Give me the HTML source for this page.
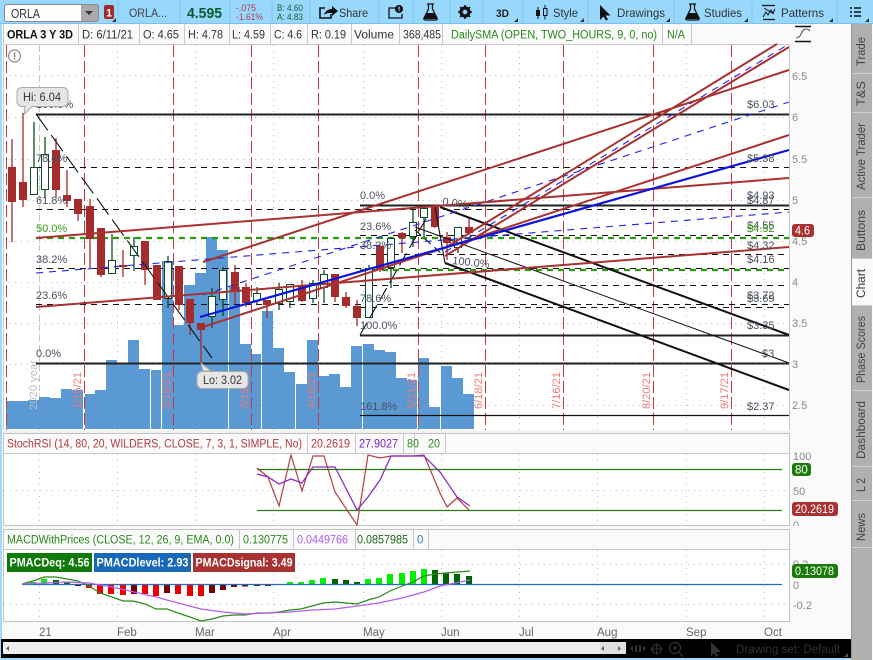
<!DOCTYPE html>
<html><head><meta charset="utf-8"><style>
html,body{margin:0;padding:0;background:#fafafa;width:873px;height:660px;overflow:hidden}
svg{display:block}
text{font-family:"Liberation Sans",sans-serif}
</style></head><body>
<svg xmlns="http://www.w3.org/2000/svg" width="873" height="660" viewBox="0 0 873 660">
<rect width="873" height="660" fill="#fafafa"/>
<!-- frame -->
<rect x="0" y="0" width="2" height="660" fill="#9fd9fb"/>
<rect width="873" height="23" fill="#99d8fd"/>
<rect y="23" width="873" height="1" fill="#7fc0e6"/>
<!-- toolbar separators -->
<path d="M118 1V23M180 1V23M230 1V23M272 1V23M310 1V23M379 1V23M413 1V23M450 1V23M483 1V23M523 1V23M588 1V23M674 1V23M752 1V23M837 1V23" stroke="#86c4e8" stroke-width="1"/>
<!-- symbol box -->
<rect x="4.500" y="4.500" width="94" height="17" rx="2" fill="#fff" stroke="#8a8a8a"/>
<text x="11" y="18" font-size="12.500" fill="#333" textLength="29" lengthAdjust="spacingAndGlyphs">ORLA</text>
<rect x="81" y="5" width="17" height="16" fill="#aaa"/>
<path d="M85 11h8l-4 4z" fill="#333"/>
<rect x="104" y="5" width="10" height="14" rx="2" fill="#a52a2a"/>
<text x="106" y="16.500" font-size="11" font-weight="bold" fill="#fff">1</text>
<path d="M116 22h-4l4-4z" fill="#333"/>
<text x="129" y="17" font-size="12" fill="#444" textLength="38" lengthAdjust="spacingAndGlyphs">ORLA...</text>
<text x="187" y="18" font-size="15" font-weight="bold" fill="#0b5a2c" textLength="35" lengthAdjust="spacingAndGlyphs">4.595</text>
<text x="236" y="11" font-size="9.500" fill="#b23a4a" textLength="20" lengthAdjust="spacingAndGlyphs">-.075</text>
<text x="236" y="20" font-size="9.500" fill="#b23a4a" textLength="27" lengthAdjust="spacingAndGlyphs">-1.61%</text>
<text x="277" y="11" font-size="9.500" fill="#15603a" textLength="26" lengthAdjust="spacingAndGlyphs">B: 4.60</text>
<text x="277" y="20" font-size="9.500" fill="#15603a" textLength="26" lengthAdjust="spacingAndGlyphs">A: 4.83</text>
<!-- share -->
<path d="M331 14v4h-11v-10h5" fill="none" stroke="#111" stroke-width="1.600"/>
<path d="M324 15c1-4 4-6 8-6v-3l6 5-6 5v-3c-3 0-6 0-8 2z" fill="#111"/>
<text x="339" y="17" font-size="12" fill="#333" textLength="29" lengthAdjust="spacingAndGlyphs">Share</text>
<!-- alert book -->
<path d="M396 8h-7v10h13v-4" fill="none" stroke="#111" stroke-width="1.300"/>
<circle cx="399" cy="9" r="4" fill="#111"/><rect x="398.400" y="6.500" width="1.300" height="3" fill="#99d8fd"/><rect x="398.400" y="10.300" width="1.300" height="1" fill="#99d8fd"/>
<!-- flask -->
<path d="M427 4h7M428.500 4v5l-4.500 9c-.5 1 0 2 1.500 2h10c1.500 0 2-1 1.500-2l-4.500-9v-5" fill="none" stroke="#111" stroke-width="1.300"/>
<path d="M426.500 13h8l3 6h-14z" fill="#111"/>
<!-- gear -->
<circle cx="465" cy="12" r="4.300" fill="none" stroke="#111" stroke-width="2.600"/>
<path d="M465 5v14M458 12h14M460 7l10 10M470 7l-10 10" stroke="#111" stroke-width="1.600"/>
<circle cx="465" cy="12" r="2.200" fill="#99d8fd"/>
<text x="496" y="17" font-size="11" font-weight="bold" fill="#222" textLength="13" lengthAdjust="spacingAndGlyphs">3D</text>
<path d="M518 22h-4l4-4zM584 22h-4l4-4zM670 22h-4l4-4zM748 22h-4l4-4zM833 22h-4l4-4zM869 22h-4l4-4z" fill="#333"/>
<!-- style -->
<rect x="536" y="10" width="4" height="6" fill="#111"/><path d="M538 7v12" stroke="#111"/>
<rect x="543.500" y="8.500" width="3.500" height="7" fill="#99d8fd" stroke="#111"/><path d="M545 5v3.500M545 15.500v4" stroke="#111"/>
<text x="553" y="17" font-size="12" fill="#333" textLength="25" lengthAdjust="spacingAndGlyphs">Style</text>
<!-- drawings cursor -->
<path d="M600 5v15l3.500-3.500 2.500 4 2-1-2.500-4h5z" fill="#111"/>
<text x="617" y="17" font-size="12" fill="#333" textLength="48" lengthAdjust="spacingAndGlyphs">Drawings</text>
<!-- studies flask -->
<path d="M689 4h7M690.500 4v5l-4.500 9c-.5 1 0 2 1.500 2h10c1.500 0 2-1 1.500-2l-4.500-9v-5" fill="none" stroke="#111" stroke-width="1.300"/>
<path d="M688.500 13h8l3 6h-14z" fill="#111"/>
<text x="704" y="17" font-size="12" fill="#333" textLength="38" lengthAdjust="spacingAndGlyphs">Studies</text>
<!-- patterns -->
<path d="M762 5.500h13M763 19.500h12" stroke="#111" stroke-width="1.200"/>
<path d="M763 17l3-5 2 3 3-5 2 3 2-4M764 8l10 6" fill="none" stroke="#111"/>
<text x="781" y="17" font-size="12" fill="#333" textLength="43" lengthAdjust="spacingAndGlyphs">Patterns</text>
<!-- list -->
<path d="M850 8h2M854 8h7M850 12h2M854 12h7M850 16h2M854 16h7" stroke="#111" stroke-width="1.500"/>

<!-- info bar -->
<path d="M3.500 44.500H789.500M3.500 24V44M78.500 24V44M139.500 24V44M184.500 24V44M229.500 24V44M270.500 24V44M307.500 24V44M351.500 24V44M399.500 24V44M442.500 24V44M662.500 24V44M691.500 24V44" stroke="#c8c8c8"/>
<g font-size="11.500" fill="#333">
<text x="7" y="38.500" font-weight="bold" fill="#111" textLength="66" lengthAdjust="spacingAndGlyphs">ORLA 3 Y 3D</text>
<text x="82" y="38.500" textLength="51" lengthAdjust="spacingAndGlyphs">D: 6/11/21</text>
<text x="143" y="38.500" textLength="36" lengthAdjust="spacingAndGlyphs">O: 4.65</text>
<text x="188" y="38.500" textLength="35" lengthAdjust="spacingAndGlyphs">H: 4.78</text>
<text x="232" y="38.500" textLength="33" lengthAdjust="spacingAndGlyphs">L: 4.59</text>
<text x="274" y="38.500" textLength="28" lengthAdjust="spacingAndGlyphs">C: 4.6</text>
<text x="311" y="38.500" textLength="35" lengthAdjust="spacingAndGlyphs">R: 0.19</text>
<text x="354" y="38.500" textLength="40" lengthAdjust="spacingAndGlyphs">Volume</text>
<text x="403" y="38.500" textLength="38" lengthAdjust="spacingAndGlyphs">368,485</text>
<text x="451" y="38.500" fill="#2a8a1a" textLength="206" lengthAdjust="spacingAndGlyphs">DailySMA (OPEN, TWO_HOURS, 9, 0, no)</text>
<text x="667" y="38.500" fill="#2a8a1a" textLength="18" lengthAdjust="spacingAndGlyphs">N/A</text>
</g>
<!-- S icon -->
<path d="M795 26.500h16M795 41.500h16" stroke="#111" stroke-width="1.600"/>
<path d="M796 38c3 0 4-2 5-4s2-5 5-5 3 1 4 2" fill="none" stroke="#555" stroke-width="1.100"/>

<!-- main chart plot -->
<rect x="3" y="45" width="786" height="385" fill="#fff"/>
<!-- grid -->
<path d="M3 75.500H789M3 117.500H789M3 159.500H789M3 200.500H789M3 241.500H789M3 282.500H789M3 323.500H789M3 364.500H789M3 405.500H789M39.500 45V430M117.500 45V430M195.500 45V430M273.500 45V430M363.500 45V430M441.500 45V430M519.500 45V430M597.500 45V430M686.500 45V430M764.500 45V430" stroke="#bcbcbc" stroke-dasharray="1 5" fill="none"/>
<path d="M39.500 45V430" stroke="#c4c4c4" stroke-dasharray="6 4"/>
<!-- volume -->
<g fill="#5a99d3">
<rect x="6" y="401" width="11" height="28"/><rect x="17" y="401" width="11" height="28"/><rect x="28" y="400" width="11" height="29"/><rect x="39" y="397" width="11" height="32"/><rect x="50" y="398" width="11" height="31"/><rect x="61" y="389" width="11" height="40"/><rect x="72" y="390" width="11" height="39"/><rect x="85" y="394" width="10" height="35"/><rect x="95" y="390" width="11" height="39"/><rect x="106" y="360" width="11" height="69"/><rect x="117" y="363" width="11" height="66"/><rect x="128" y="340" width="11" height="89"/><rect x="139" y="369" width="11" height="60"/><rect x="151" y="370" width="10" height="59"/><rect x="162" y="261" width="11" height="168"/><rect x="173" y="325" width="11" height="104"/><rect x="184" y="285" width="11" height="144"/><rect x="195" y="273" width="11" height="156"/><rect x="206" y="237" width="11" height="192"/><rect x="217" y="250" width="11" height="179"/><rect x="229" y="287" width="11" height="142"/><rect x="240" y="344" width="11" height="85"/><rect x="251" y="354" width="10" height="75"/><rect x="262" y="311" width="11" height="118"/><rect x="273" y="348" width="11" height="81"/><rect x="284" y="372" width="11" height="57"/><rect x="296" y="384" width="11" height="45"/><rect x="307" y="340" width="11" height="89"/><rect x="318" y="376" width="11" height="53"/><rect x="329" y="374" width="11" height="55"/><rect x="340" y="387" width="11" height="42"/><rect x="351" y="346" width="11" height="83"/><rect x="363" y="344" width="11" height="85"/><rect x="374" y="350" width="11" height="79"/><rect x="385" y="352" width="11" height="77"/><rect x="396" y="378" width="11" height="51"/><rect x="407" y="380" width="10" height="49"/><rect x="418" y="358" width="11" height="71"/><rect x="429" y="407" width="11" height="22"/><rect x="441" y="366" width="11" height="63"/><rect x="452" y="378" width="11" height="51"/><rect x="463" y="394" width="11" height="35"/>
</g>
<!-- vertical red dashes -->
<path d="M6.500 45V430M84.500 45V430M173.500 45V430M251.500 45V430M318.500 45V430M418.500 45V430M485.500 45V430M563.500 45V430M653.500 45V430M731.500 45V430" stroke="#c8383e" stroke-width="1" stroke-dasharray="12 4" fill="none"/>
<!-- rotated labels -->
<g font-size="11" fill="#ea7a7a">
<text transform="translate(81,409) rotate(-90)" textLength="37" lengthAdjust="spacingAndGlyphs">1/15/21</text>
<text transform="translate(170,409) rotate(-90)" textLength="37" lengthAdjust="spacingAndGlyphs">2/19/21</text>
<text transform="translate(248,409) rotate(-90)" textLength="37" lengthAdjust="spacingAndGlyphs">3/19/21</text>
<text transform="translate(315,409) rotate(-90)" textLength="37" lengthAdjust="spacingAndGlyphs">4/16/21</text>
<text transform="translate(415,409) rotate(-90)" textLength="37" lengthAdjust="spacingAndGlyphs">5/21/21</text>
<text transform="translate(482,409) rotate(-90)" textLength="37" lengthAdjust="spacingAndGlyphs">6/18/21</text>
<text transform="translate(560,409) rotate(-90)" textLength="37" lengthAdjust="spacingAndGlyphs">7/16/21</text>
<text transform="translate(650,409) rotate(-90)" textLength="37" lengthAdjust="spacingAndGlyphs">8/20/21</text>
<text transform="translate(728,409) rotate(-90)" textLength="37" lengthAdjust="spacingAndGlyphs">9/17/21</text>
<text transform="translate(37,410) rotate(-90)" fill="#bdbdbd" textLength="50" lengthAdjust="spacingAndGlyphs">2020 year</text>
</g>
<!-- dashed levels -->
<path d="M36 167.500H789M36 209.500H789M36 268.500H789M36 304.500H789M360 235.500H789M360 254.500H789M360 285.500H789M360 307.500H789" stroke="#111" stroke-width="1" stroke-dasharray="6 5" fill="none"/>
<!-- green dashed -->
<path d="M36 238H789M360 270H789" stroke="#2a9a12" stroke-width="2.200" stroke-dasharray="6 5" fill="none"/>
<!-- solid levels -->
<path d="M36 114.500H789M360 205.500H789M360 335.500H789M36 363.500H789" stroke="#222" stroke-width="2" fill="none"/>
<path d="M360 415.500H789" stroke="#111" stroke-width="1.200"/>
<!-- candles wicks -->
<path fill="none" stroke="#a52a2a" stroke-width="1.300" d="M12 139V242M23 113V207M56 138V197M67 170V207M78 199V221M90 199V268M101 228V277M123 250V277M145 241V285M157 265V300M179 266V310M190 299V335M201 323V363M235 265V304M246 283V307M267 300V318M302 280V302M335 274V302M346 292V308M357 300V326M380 245V272M402 232V253M435 206V228M447 232V260M469 218V235"/>
<path fill="none" stroke="#0b4d26" stroke-width="1.300" d="M34 122V195M45 137V198M112 234V274M134 237V271M168 256V308M212 288V328M223 267V316M257 287V305M279 283V310M290 284V308M313 280V303M324 270V303M369 265V318M391 237V288M413 210V247M424 207V237M458 227V253"/>
<!-- bodies red -->
<g fill="#a52c2c">
<rect x="8" y="167" width="8" height="35"/><rect x="19" y="182" width="8" height="18"/><rect x="52" y="150" width="8" height="40"/><rect x="63" y="195" width="8" height="6"/><rect x="74" y="199" width="8" height="15"/><rect x="86" y="206" width="8" height="33"/><rect x="97" y="228" width="8" height="47"/><rect x="119" y="265" width="8" height="2"/><rect x="141" y="241" width="8" height="29"/><rect x="153" y="265" width="8" height="35"/><rect x="175" y="266" width="8" height="39"/><rect x="186" y="299" width="8" height="24"/><rect x="197" y="323" width="8" height="7"/><rect x="231" y="272" width="8" height="20"/><rect x="242" y="287" width="8" height="16"/><rect x="263" y="300" width="8" height="5"/><rect x="298" y="285" width="8" height="16"/><rect x="331" y="274" width="8" height="23"/><rect x="342" y="297" width="8" height="9"/><rect x="353" y="306" width="8" height="12"/><rect x="376" y="246" width="8" height="24"/><rect x="398" y="233" width="8" height="5"/><rect x="431" y="207" width="8" height="20"/><rect x="443" y="237" width="8" height="6"/><rect x="465" y="227" width="8" height="6"/>
</g>
<!-- bodies green -->
<g fill="#fff" stroke="#0b4d26" stroke-width="1">
<rect x="30.500" y="167.500" width="7" height="27"/><rect x="41.500" y="154.500" width="7" height="35"/><rect x="108.500" y="260.500" width="7" height="13"/><rect x="130.500" y="246.500" width="7" height="9"/><rect x="164.500" y="261.500" width="7" height="37"/><rect x="208.500" y="296.500" width="7" height="20"/><rect x="219.500" y="270.500" width="7" height="29"/><rect x="253.500" y="293.500" width="7" height="7"/><rect x="275.500" y="289.500" width="7" height="14"/><rect x="286.500" y="284.500" width="7" height="17"/><rect x="309.500" y="283.500" width="7" height="15"/><rect x="320.500" y="274.500" width="7" height="13"/><rect x="365.500" y="268.500" width="7" height="49"/><rect x="387.500" y="238.500" width="7" height="29"/><rect x="409.500" y="222.500" width="7" height="14"/><rect x="420.500" y="208.500" width="7" height="9"/><rect x="454.500" y="227.500" width="7" height="20"/>
</g>
<!-- black diagonals -->
<path d="M36 114L212 358" stroke="#111" stroke-width="1.100" stroke-dasharray="20 6" fill="none"/>
<path d="M360 335L427 217" stroke="#111" stroke-width="1.100" stroke-dasharray="14 6" fill="none"/>
<path d="M415 230L443 255" stroke="#111" stroke-width="1.100" stroke-dasharray="8 5" fill="none"/>
<path d="M435 207L445 263" stroke="#111" stroke-width="1.100" fill="none"/>
<path d="M440 207L789 335M445 263L789 390" stroke="#111" stroke-width="2" fill="none"/>
<path d="M415 227L789 363" stroke="#111" stroke-width="1" fill="none"/>
<!-- blue dashed -->
<path d="M36 273L789 212M203 295L789 102M445 252L789 44" stroke="#2222e6" stroke-width="1.100" stroke-dasharray="7 6" fill="none"/>
<!-- brown trendlines -->
<path d="M36 238L789 178M36 307L789 247M203 262L789 70M203 327L789 135M445 248L777 44M445 256L789 47" stroke="#a83232" stroke-width="2" fill="none"/>
<!-- blue line -->
<path d="M200 317L789 150" stroke="#0a14e0" stroke-width="2.200" fill="none"/>
<!-- fib labels -->
<g font-size="11" fill="#4a5060">
<text x="36" y="108">100.0%</text>
<text x="36" y="162">78.6%</text>
<text x="36" y="204">61.8%</text>
<text x="36" y="232" fill="#3a9a1a">50.0%</text>
<text x="36" y="263">38.2%</text>
<text x="36" y="299">23.6%</text>
<text x="36" y="357">0.0%</text>
<text x="360" y="199">0.0%</text>
<text x="360" y="230">23.6%</text>
<text x="360" y="249">38.2%</text>
<text x="360" y="302">78.6%</text>
<text x="360" y="329">100.0%</text>
<text x="360" y="410">161.8%</text>
<text x="442" y="205" transform="rotate(8 442 205)">0.0%</text>
<text x="452" y="264" transform="rotate(6 452 264)">100.0%</text>
<text x="747" y="108">$6.03</text>
<text x="747" y="162">$5.38</text>
<text x="747" y="199">$4.93</text>
<text x="747" y="204">$4.87</text>
<text x="747" y="229">$4.55</text>
<text x="747" y="232" fill="#3a9a1a">$4.52</text>
<text x="747" y="249">$4.32</text>
<text x="747" y="263">$4.16</text>
<text x="747" y="299">$3.72</text>
<text x="747" y="302">$3.69</text>
<text x="747" y="329">$3.35</text>
<text x="762" y="357">$3</text>
<text x="747" y="410">$2.37</text>
</g>
<!-- alert -->
<circle cx="14.500" cy="56" r="6" fill="#fff" stroke="#888" stroke-width="1.200"/>
<path d="M14.500 52.500v4.500M14.500 58v1.500" stroke="#777" stroke-width="1.300"/>
<!-- callouts -->
<path d="M22 87.500h41a5 5 0 0 1 5 5v9a5 5 0 0 1-5 5H32l-8 8 1-8h-3a5 5 0 0 1-5-5v-9a5 5 0 0 1 5-5z" fill="#e6e6e6" stroke="#aaa"/>
<text x="23" y="101" font-size="12" fill="#333" textLength="38" lengthAdjust="spacingAndGlyphs">Hi: 6.04</text>
<path d="M202 371.500h41a5 5 0 0 1 5 5v7a5 5 0 0 1-5 5h-41a5 5 0 0 1-5-5v-7a5 5 0 0 1 5-5zM203 371l-2-8 10 8z" fill="#e6e6e6" stroke="#aaa"/>
<text x="203" y="384" font-size="12" fill="#333" textLength="39" lengthAdjust="spacingAndGlyphs">Lo: 3.02</text>
<!-- right axis -->
<g font-size="11" fill="#8a8a8a">
<text x="792" y="80">6.5</text><text x="792" y="121">6</text><text x="792" y="163">5.5</text><text x="792" y="204">5</text><text x="792" y="245">4.5</text><text x="792" y="286">4</text><text x="792" y="327">3.5</text><text x="792" y="368">3</text><text x="792" y="409">2.5</text>
</g>
<rect x="792" y="224" width="22" height="13" rx="3" fill="#a83232"/>
<text x="795" y="234.500" font-size="11.500" fill="#fff" textLength="15" lengthAdjust="spacingAndGlyphs">4.6</text>
<path d="M789.500 45V430" stroke="#c8c8c8"/>
<path d="M3.500 430V45" stroke="#c8c8c8"/>
<!-- pane 2 -->
<rect x="3" y="431" width="786" height="2" fill="#f0f0f0"/>
<rect x="3.500" y="433.500" width="786" height="92" fill="#fff" stroke="#c4c4c4"/>
<rect x="4" y="434" width="785" height="19" fill="#fafafa"/>
<path d="M4 453.500H789M307.500 434V453M355.500 434V453M403.500 434V453M414.500 434V453M445.500 434V453" stroke="#c8c8c8"/>
<g font-size="11.500">
<text x="7" y="447.500" fill="#b03a3a" textLength="295" lengthAdjust="spacingAndGlyphs">StochRSI (14, 80, 20, WILDERS, CLOSE, 7, 3, 1, SIMPLE, No)</text>
<text x="311" y="447.500" fill="#b03a3a" textLength="39" lengthAdjust="spacingAndGlyphs">20.2619</text>
<text x="359" y="447.500" fill="#7a22b5" textLength="39" lengthAdjust="spacingAndGlyphs">27.9027</text>
<text x="407" y="447.500" fill="#2a8a1a" textLength="12" lengthAdjust="spacingAndGlyphs">80</text>
<text x="428" y="447.500" fill="#2a8a1a" textLength="12" lengthAdjust="spacingAndGlyphs">20</text>
</g>
<path d="M4 490.500H789M39.500 454V525M117.500 454V525M195.500 454V525M273.500 454V525M363.500 454V525M441.500 454V525M519.500 454V525M597.500 454V525M686.500 454V525M764.500 454V525" stroke="#bcbcbc" stroke-dasharray="1 5" fill="none"/>
<path d="M257 469.500H782M257 510.500H782" stroke="#2a7a10" stroke-width="1.200"/>
<polyline fill="none" stroke="#b04040" stroke-width="1.200" points="257,468 268,477 279,506 291,455 302,491 313,456 324,456 335,492 347,510 357,525 368,455 380,458 391,456 413,456 424,455 440,493 447,507 457,498 469,510"/>
<polyline fill="none" stroke="#8a2fc4" stroke-width="1.300" points="257,474 268,477 279,484 291,479 302,483 313,467 335,467 357,510 368,497 380,480 391,456 424,456 440,472 457,497 470,506"/>
<g font-size="11" fill="#8a8a8a"><text x="793" y="460">100</text><text x="793" y="495">50</text><text x="793" y="529">0</text></g>
<rect x="790" y="526" width="50" height="6" fill="#fafafa"/>
<rect x="792" y="463" width="19" height="13" rx="3" fill="#1a7a0a"/>
<text x="795" y="473.500" font-size="11.500" fill="#fff">80</text>
<rect x="792" y="502" width="46" height="14" rx="3" fill="#a83232"/>
<text x="795" y="513" font-size="11.500" fill="#fff" textLength="39" lengthAdjust="spacingAndGlyphs">20.2619</text>
<!-- pane 3 -->
<rect x="3" y="526" width="786" height="3" fill="#fafafa"/>
<rect x="3.500" y="529.500" width="786" height="92" fill="#fff" stroke="#c4c4c4"/>
<rect x="4" y="530" width="785" height="19" fill="#fafafa"/>
<path d="M4 549.500H789M239.500 530V549M293.500 530V549M355.500 530V549M413.500 530V549M428.500 530V549" stroke="#c8c8c8"/>
<g font-size="11.500">
<text x="7" y="543.500" fill="#2a8a1a" textLength="227" lengthAdjust="spacingAndGlyphs">MACDWithPrices (CLOSE, 12, 26, 9, EMA, 0.0)</text>
<text x="243" y="543.500" fill="#2a8a1a" textLength="45" lengthAdjust="spacingAndGlyphs">0.130775</text>
<text x="297" y="543.500" fill="#b060f0" textLength="51" lengthAdjust="spacingAndGlyphs">0.0449766</text>
<text x="357" y="543.500" fill="#1a6a1a" textLength="51" lengthAdjust="spacingAndGlyphs">0.0857985</text>
<text x="417" y="543.500" fill="#3a80c8">0</text>
</g>
<path d="M4 564.500H789M4 604.500H789M39.500 550V621M117.500 550V621M195.500 550V621M273.500 550V621M363.500 550V621M441.500 550V621M519.500 550V621M597.500 550V621M686.500 550V621M764.500 550V621" stroke="#bcbcbc" stroke-dasharray="1 5" fill="none"/>
<!-- hist -->
<g fill="#00f000"><rect x="30" y="582" width="6" height="3"/><rect x="41" y="579" width="6" height="6"/><rect x="287" y="582" width="6" height="3"/><rect x="298" y="582" width="6" height="3"/><rect x="309" y="580" width="6" height="5"/><rect x="320" y="578" width="6" height="7"/><rect x="365" y="579" width="6" height="6"/><rect x="376" y="578" width="6" height="7"/><rect x="387" y="574" width="6" height="11"/><rect x="399" y="573" width="6" height="12"/><rect x="410" y="571" width="6" height="14"/><rect x="421" y="569" width="6" height="16"/></g>
<g fill="#006400"><rect x="53" y="580" width="6" height="5"/><rect x="64" y="582" width="6" height="3"/><rect x="332" y="579" width="6" height="6"/><rect x="343" y="580" width="6" height="5"/><rect x="354" y="582" width="6" height="3"/><rect x="432" y="570" width="6" height="15"/><rect x="443" y="573" width="6" height="12"/><rect x="454" y="574" width="6" height="11"/><rect x="466" y="576" width="6" height="9"/></g>
<g fill="#ee0000"><rect x="86" y="585" width="6" height="3"/><rect x="97" y="585" width="6" height="9"/><rect x="108" y="585" width="6" height="9"/><rect x="120" y="585" width="6" height="10"/><rect x="142" y="585" width="6" height="9"/><rect x="153" y="585" width="6" height="11"/><rect x="175" y="585" width="6" height="9"/><rect x="187" y="585" width="6" height="11"/><rect x="198" y="585" width="6" height="11"/></g>
<g fill="#7a0000"><rect x="75" y="585" width="6" height="1"/><rect x="131" y="585" width="6" height="9"/><rect x="164" y="585" width="6" height="8"/><rect x="209" y="585" width="6" height="8"/><rect x="220" y="585" width="6" height="5"/><rect x="231" y="585" width="6" height="2"/><rect x="242" y="585" width="6" height="1.500"/><rect x="254" y="585" width="6" height="1"/><rect x="265" y="585" width="6" height="1"/></g>
<path d="M22 584.500H782" stroke="#1a70c0" stroke-width="1.300"/>
<polyline fill="none" stroke="#2a8a1a" stroke-width="1.200" points="22,584 33,581 44,577 56,577 67,579 78,581 89,586 100,593 112,597 123,601 133,601 145,604 156,609 167,609 178,613 190,617 201,621 212,619 223,616 234,615 245,615 257,613 268,613 279,612 290,610 301,609 312,606 323,603 335,602 346,603 357,604 368,600 379,597 390,591 402,586 413,582 424,576 435,574 446,573 457,572 470,571"/>
<polyline fill="none" stroke="#b060f0" stroke-width="1.300" points="22,584 44,583 67,582 89,583 112,587 134,592 156,597 178,603 201,609 223,612 245,614 268,613 290,612 312,610 335,609 357,606 379,603 402,598 424,592 440,586 470,580"/>
<rect x="7" y="553" width="85" height="19" fill="#0f7a0a"/>
<rect x="94" y="553" width="97" height="19" fill="#1868b8"/>
<rect x="193" y="553" width="102" height="19" fill="#a83232"/>
<g font-size="11.500" font-weight="bold" fill="#fff">
<text x="9.500" y="566.500" textLength="80" lengthAdjust="spacingAndGlyphs">PMACDeq: 4.56</text>
<text x="96.500" y="566.500" textLength="92" lengthAdjust="spacingAndGlyphs">PMACDlevel: 2.93</text>
<text x="195.500" y="566.500" textLength="97" lengthAdjust="spacingAndGlyphs">PMACDsignal: 3.49</text>
</g>
<g font-size="11" fill="#8a8a8a"><text x="793" y="568">0.2</text><text x="793" y="589">0</text><text x="793" y="609">-0.2</text></g>
<rect x="792" y="564" width="46" height="14" rx="3" fill="#1a7a0a"/>
<text x="795" y="575" font-size="11.500" fill="#fff" textLength="39" lengthAdjust="spacingAndGlyphs">0.13078</text>
<!-- time axis -->
<g font-size="11.500" fill="#666">
<text x="39" y="636">21</text><text x="117" y="636">Feb</text><text x="195" y="636">Mar</text><text x="273" y="636">Apr</text><text x="363" y="636">May</text><text x="441" y="636">Jun</text><text x="519" y="636">Jul</text><text x="597" y="636">Aug</text><text x="686" y="636">Sep</text><text x="764" y="636">Oct</text>
</g>
<!-- bottom -->
<rect x="1" y="639" width="850" height="19" fill="#000"/>
<rect x="3" y="642" width="623" height="12" fill="#eeeeee"/>
<rect x="600" y="642" width="26" height="12" fill="#e0e0e0"/>
<path d="M9 646v5l-3-2.500zM604 646v5l-3-2.500zM618 646v5l3-2.500z" fill="#666"/>
<path d="M630 648.500l3-3v6zM646 648.500l-3-3v6z" fill="#333"/><rect x="635" y="645" width="2" height="7" fill="#333"/><rect x="639" y="645" width="2" height="7" fill="#333"/>
<circle cx="656.500" cy="649" r="4.500" fill="none" stroke="#333" stroke-width="1.200"/><path d="M650 649h13M656.500 643v12" stroke="#333"/>
<circle cx="675" cy="648" r="5.500" fill="none" stroke="#333" stroke-width="1.200"/><path d="M679 652l4 5M673 648h4M675 646v4" stroke="#333" stroke-width="1.200"/>
<path d="M711 642v14l3-3 2.500 4 2-1-2.500-4h5z" fill="#333"/>
<text x="736" y="653" font-size="11.500" fill="#333" textLength="104" lengthAdjust="spacingAndGlyphs">Drawing set: Default</text>
<path d="M848 657h-4l4-4z" fill="#555"/>
<rect x="0" y="658" width="851" height="2" fill="#9fd9fb"/>
<!-- side tabs -->
<rect x="851" y="24" width="21" height="636" fill="#b0b0b0"/>
<rect x="851" y="258" width="21" height="47" fill="#fafafa"/>
<path d="M851 73.500H872M851 112.500H872M851 197.500H872M851 258.500H872M851 305.500H872M851 390.500H872M851 466.500H872M851 500.500H872M851 547.500H872" stroke="#d0d0d0"/>
<path d="M851.500 24V660" stroke="#999"/>
<g font-size="11.500" fill="#444">
<text transform="translate(865,66) rotate(-90)" textLength="29" lengthAdjust="spacingAndGlyphs">Trade</text>
<text transform="translate(865,106) rotate(-90)" textLength="25" lengthAdjust="spacingAndGlyphs">T&amp;S</text>
<text transform="translate(865,190) rotate(-90)" textLength="67" lengthAdjust="spacingAndGlyphs">Active Trader</text>
<text transform="translate(865,251) rotate(-90)" textLength="41" lengthAdjust="spacingAndGlyphs">Buttons</text>
<text transform="translate(865,298) rotate(-90)" textLength="29" fill="#333" lengthAdjust="spacingAndGlyphs">Chart</text>
<text transform="translate(865,383) rotate(-90)" textLength="67" lengthAdjust="spacingAndGlyphs">Phase Scores</text>
<text transform="translate(865,459) rotate(-90)" textLength="58" lengthAdjust="spacingAndGlyphs">Dashboard</text>
<text transform="translate(865,492) rotate(-90)" textLength="14" lengthAdjust="spacingAndGlyphs">L 2</text>
<text transform="translate(865,541) rotate(-90)" textLength="28" lengthAdjust="spacingAndGlyphs">News</text>
</g>
</svg>
</body></html>
